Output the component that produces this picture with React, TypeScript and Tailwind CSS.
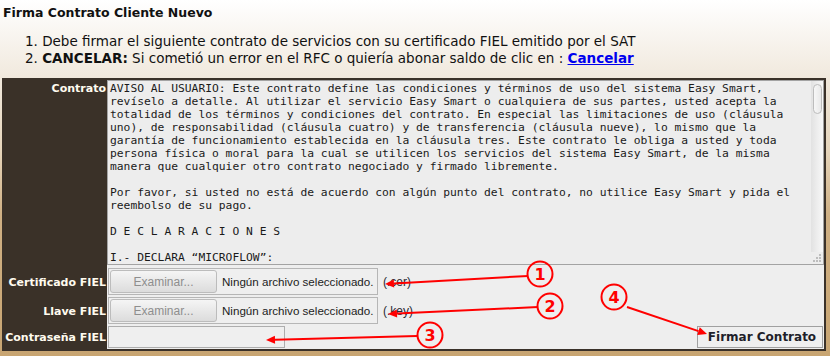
import React from "react";

const contrato = [
  "AVISO AL USUARIO: Este contrato define las condiciones y términos de uso del sistema Easy Smart,",
  "revíselo a detalle. Al utilizar el servicio Easy Smart o cualquiera de sus partes, usted acepta la",
  "totalidad de los términos y condiciones del contrato. En especial las limitaciones de uso (cláusula",
  "uno), de responsabilidad (cláusula cuatro) y de transferencia (cláusula nueve), lo mismo que la",
  "garantía de funcionamiento establecida en la cláusula tres. Este contrato le obliga a usted y toda",
  "persona física o moral para la cual se utilicen los servicios del sistema Easy Smart, de la misma",
  "manera que cualquier otro contrato negociado y firmado libremente.",
  "",
  "Por favor, si usted no está de acuerdo con algún punto del contrato, no utilice Easy Smart y pida el",
  "reembolso de su pago.",
  "",
  "D E C L A R A C I O N E S",
  "",
  "I.- DECLARA “MICROFLOW”:",
].join("\n");

const Label = ({ children, top }: { children: React.ReactNode; top?: boolean }) => (
  <div
    className={
      "flex justify-end bg-[#3a3128] pr-[1px] font-['DejaVu_Sans',sans-serif] text-[11px] font-bold leading-[13px] text-[#fffbef] " +
      (top ? "items-start pt-[2px]" : "items-center")
    }
  >
    {children}
  </div>
);

const FileField = ({ ext }: { ext: string }) => (
  <div className="flex h-[27px] items-center pl-[1px]">
    <div className="flex h-full w-[270px] shrink-0 items-center overflow-hidden border border-[#b6b6b6] bg-[#efefef] pl-[1px]">
      <button className="h-[23px] w-[107px] shrink-0 rounded-[3px] border border-[#bcbcbc] bg-gradient-to-b from-[#f5f5f5] to-[#dcdcdc] font-['Liberation_Sans',sans-serif] text-[12px] text-[#8e8e8e]">
        Examinar...
      </button>
      <span className="ml-[5px] whitespace-nowrap font-['Liberation_Sans',sans-serif] text-[11.6px] text-[#1c1c1c]">
        Ningún archivo seleccionado.
      </span>
    </div>
    <span className="ml-[5px] whitespace-nowrap font-['Liberation_Sans',sans-serif] text-[12px] text-[#2a2a35]">
      {ext}
    </span>
  </div>
);

const Marker = ({ cx, cy, n }: { cx: number; cy: number; n: string }) => (
  <g>
    <circle cx={cx} cy={cy} r={12.5} fill="none" stroke="#ff0000" strokeWidth={2} />
    <text
      x={cx}
      y={cy + 5.5}
      textAnchor="middle"
      fontFamily="DejaVu Sans, sans-serif"
      fontWeight="bold"
      fontSize="16"
      fill="#ff0000"
    >
      {n}
    </text>
  </g>
);

const Arrow = ({ x1, y1, x2, y2 }: { x1: number; y1: number; x2: number; y2: number }) => {
  const a = Math.atan2(y2 - y1, x2 - x1);
  const l = 9;
  const w = 4;
  const bx = x2 - l * Math.cos(a);
  const by = y2 - l * Math.sin(a);
  const p1 = `${bx + w * Math.sin(a)},${by - w * Math.cos(a)}`;
  const p2 = `${bx - w * Math.sin(a)},${by + w * Math.cos(a)}`;
  return (
    <g>
      <line x1={x1} y1={y1} x2={bx} y2={by} stroke="#ff0000" strokeWidth={2} />
      <polygon points={`${x2},${y2} ${p1} ${p2}`} fill="#ff0000" />
    </g>
  );
};

export default function App() {
  return (
    <div className="relative h-[356px] w-[830px] overflow-hidden bg-[linear-gradient(to_bottom,#ffffff_0px,#f0e8dc_80px,#e6d5bb_150px,#cfb084_215px,#c8a572_356px)] font-['DejaVu_Sans',sans-serif]">
      <div className="pl-[3px] pt-[5px] text-[12.5px] font-bold leading-[16px] text-[#111]">
        Firma Contrato Cliente Nuevo
      </div>
      <ol className="mt-[12px] pl-[25px] text-[13.5px] leading-[17px] text-[#111]">
        <li>1. Debe firmar el siguiente contrato de servicios con su certificado FIEL emitido por el SAT</li>
        <li>
          2. <b>CANCELAR:</b> Si cometió un error en el RFC o quiería abonar saldo de clic en :{" "}
          <a href="#" className="font-bold text-[#0000ee] underline">
            Cancelar
          </a>
        </li>
      </ol>

      <div className="ml-[2px] mt-[11px] w-[824px] border-2 border-[#3a3129] bg-[#3a3128]">
        <div className="grid grid-cols-[103px_717px]">
          <Label top>Contrato</Label>
          <div className="bg-[#eeeeee] pb-[3px]">
            <div className="relative h-[185px] overflow-hidden border border-[#a3a3a3] bg-[#ededed]">
              <div className="whitespace-pre pl-[2px] pt-[1px] font-['DejaVu_Sans_Mono',monospace] text-[11.3px] leading-[13px] text-[#1a1a1a]">
                {contrato}
              </div>
              <div className="absolute right-0 top-0 h-[171px] w-[12px] bg-gradient-to-r from-[#e2e2e2] to-[#f8f8f8]">
                <div className="mx-auto mt-[3px] h-[30px] w-[9px] rounded-full border border-[#bdbdbd] bg-gradient-to-r from-[#f7f7f7] to-[#e9e9e9]" />
              </div>
              <svg className="absolute bottom-[1px] right-[1px]" width="9" height="9">
                <rect x="6" y="0" width="2" height="2" fill="#bdbdbd" />
                <rect x="3" y="3" width="2" height="2" fill="#bdbdbd" />
                <rect x="6" y="3" width="2" height="2" fill="#bdbdbd" />
                <rect x="0" y="6" width="2" height="2" fill="#bdbdbd" />
                <rect x="3" y="6" width="2" height="2" fill="#bdbdbd" />
                <rect x="6" y="6" width="2" height="2" fill="#bdbdbd" />
              </svg>
            </div>
          </div>

          <Label>Certificado FIEL</Label>
          <div className="bg-[#eeeeee] pb-[2px]">
            <FileField ext="(.cer)" />
          </div>

          <Label>Llave FIEL</Label>
          <div className="bg-[#eeeeee] pb-[2px]">
            <FileField ext="(.key)" />
          </div>

          <Label>Contraseña FIEL</Label>
          <div className="flex items-center bg-[#eeeeee] pb-[1px] pl-[1px] pr-[1px]">
            <input
              type="password"
              className="h-[22px] w-[177px] border border-[#adadad] bg-[#efefef] outline-none"
            />
            <button className="ml-auto h-[22px] w-[126px] border border-[#a0a0a0] bg-[#efefef] pl-[4px] text-[12px] font-bold text-[#1f1f2a]">
              Firmar Contrato
            </button>
          </div>
        </div>
      </div>

      <svg className="pointer-events-none absolute left-0 top-0" width="830" height="356">
        <Arrow x1={528} y1={276} x2={385} y2={284} />
        <Marker cx={540} cy={274} n="1" />
        <Arrow x1={538} y1={307} x2={388} y2={314} />
        <Marker cx={550} cy={306} n="2" />
        <Arrow x1={417} y1={336} x2={266} y2={340} />
        <Marker cx={430} cy={335} n="3" />
        <Arrow x1={627} y1={307} x2={707} y2={334} />
        <Marker cx={614} cy={297} n="4" />
      </svg>
    </div>
  );
}
